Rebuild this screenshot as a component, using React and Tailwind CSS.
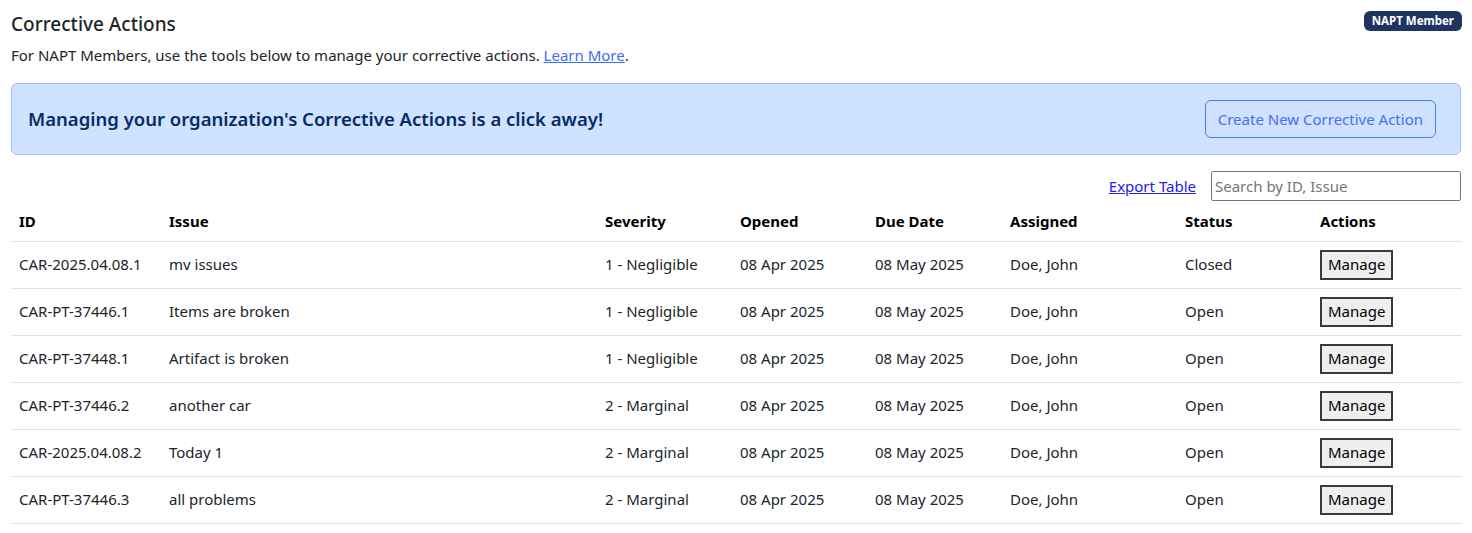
import React from "react";

const rows = [
  ["CAR-2025.04.08.1", "mv issues", "1 - Negligible", "Closed"],
  ["CAR-PT-37446.1", "Items are broken", "1 - Negligible", "Open"],
  ["CAR-PT-37448.1", "Artifact is broken", "1 - Negligible", "Open"],
  ["CAR-PT-37446.2", "another car", "2 - Marginal", "Open"],
  ["CAR-2025.04.08.2", "Today 1", "2 - Marginal", "Open"],
  ["CAR-PT-37446.3", "all problems", "2 - Marginal", "Open"],
];

const cols = ["w-[150px]", "w-[436px]", "w-[135px]", "w-[135px]", "w-[135px]", "w-[175px]", "w-[135px]", "w-[150px]"];

export default function App() {
  return (
    <div className="bg-white text-[#212529] font-['Noto_Sans','Open_Sans',sans-serif] px-[11px] pt-[10px] w-[1472px] h-[533px] overflow-hidden">
      {/* === HEADER === */}
      <div className="flex items-start justify-between h-[28px]">
        <h1 className="text-[19px] font-medium leading-[28px]">Corrective Actions</h1>
        <span className="mt-[1px] mr-[-1px] bg-[#1f3461] text-white text-[11.5px] font-bold leading-[20px] px-[8px] rounded-[6px]">NAPT Member</span>
      </div>
      <p className="text-[15px] leading-[20px] mt-[7px]">
        For NAPT Members, use the tools below to manage your corrective actions.{" "}
        <a href="#" className="text-[#3b6cf6] underline">Learn More</a>.
      </p>

      {/* === ALERT === */}
      <div className="mt-[18px] h-[72px] bg-[#cfe2ff] border border-[#9ec5fe] rounded-[6px] flex items-center justify-between pl-[16px] pr-[24px]">
        <div className="text-[18.5px] font-semibold text-[#052c65]">Managing your organization's Corrective Actions is a click away!</div>
        <button className="h-[38px] px-[12px] border border-[#3b82f6] text-[#4a6cf7] text-[15px] rounded-[6px]">Create New Corrective Action</button>
      </div>

      {/* === TOOLS === */}
      <div className="mt-[16px] flex items-center justify-end gap-[15px] h-[30px]">
        <a href="#" className="text-[15px] text-[#2020ee] underline">Export Table</a>
        <input
          type="text"
          placeholder="Search by ID, Issue"
          className="w-[250px] h-[30px] border border-[#767676] rounded-[2px] px-[3px] text-[15px] placeholder-[#757575] outline-none"
        />
      </div>

      {/* === TABLE === */}
      <table className="w-[1451px] border-collapse text-[15px] table-fixed">
        <thead>
          <tr className="h-[40px] border-b border-[#dee2e6]">
            {["ID", "Issue", "Severity", "Opened", "Due Date", "Assigned", "Status", "Actions"].map((h, i) => (
              <th key={h} className={`${cols[i]} text-left font-bold px-[8px] text-black`}>{h}</th>
            ))}
          </tr>
        </thead>
        <tbody>
          {rows.map((r) => (
            <tr key={r[0]} className="h-[47px] border-b border-[#dee2e6]">
              <td className="px-[8px]">{r[0]}</td>
              <td className="px-[8px]">{r[1]}</td>
              <td className="px-[8px]">{r[2]}</td>
              <td className="px-[8px]">08 Apr 2025</td>
              <td className="px-[8px]">08 May 2025</td>
              <td className="px-[8px]">Doe, John</td>
              <td className="px-[8px]">{r[3]}</td>
              <td className="px-[8px]">
                <button className="h-[30px] px-[6px] bg-[#efefef] border-2 border-[#3a3a3a] text-[15px] text-black">Manage</button>
              </td>
            </tr>
          ))}
        </tbody>
      </table>
    </div>
  );
}
